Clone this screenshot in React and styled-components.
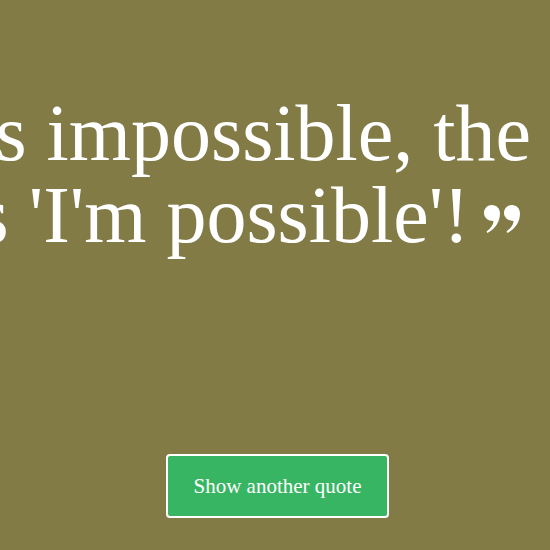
import React from "react";
import styled, { createGlobalStyle } from "styled-components";

const Global = createGlobalStyle`
  html, body {
    margin: 0;
    padding: 0;
    background: #827b46;
    overflow: hidden;
  }
  #root {
    min-height: 100vh;
  }
`;

const Page = styled.main`
  min-height: 100vh;
  width: 100%;
  display: flex;
  flex-direction: column;
  align-items: center;
  overflow: hidden;
  background: #827b46;
  font-family: "Liberation Serif", "Times New Roman", serif;
`;

const QuoteText = styled.p`
  flex-shrink: 0;
  width: 1168px;
  margin: 92px 0 0;
  font-size: 80px;
  line-height: 82px;
  color: #ffffff;
  text-align: left;
`;

const QuoteMark = styled.svg`
  display: inline-block;
  width: 37px;
  height: 28px;
  margin-left: 13px;
  vertical-align: 9px;
  fill: #ffffff;
`;

const NextButton = styled.button`
  box-sizing: border-box;
  margin: 198px 0 0 5px;
  width: 223px;
  height: 64px;
  padding: 0 24px;
  background: #38b563;
  color: #ffffff;
  border: 2px solid #ffffff;
  border-radius: 4px;
  font-family: "Liberation Serif", "Times New Roman", serif;
  font-size: 21px;
  cursor: pointer;
`;

const mark =
  "M9 0 C13.5 0 17 3.5 17 8.5 C17 17 12 24 4.5 28 L3.5 26.5 C8 23 10.5 19.5 10.5 16 C5 16 1 12.5 1 8 C1 3.5 4.5 0 9 0 Z";

export default function App() {
  return (
    <>
      <Global />
      <Page>
        <QuoteText>
          Nothing is impossible, the word itself says 'I'm possible'!
          <QuoteMark viewBox="0 0 37 28" aria-hidden="true">
            <path d={mark} />
            <path d={mark} transform="translate(20 0)" />
          </QuoteMark>
        </QuoteText>
        <NextButton type="button">Show another quote</NextButton>
      </Page>
    </>
  );
}
